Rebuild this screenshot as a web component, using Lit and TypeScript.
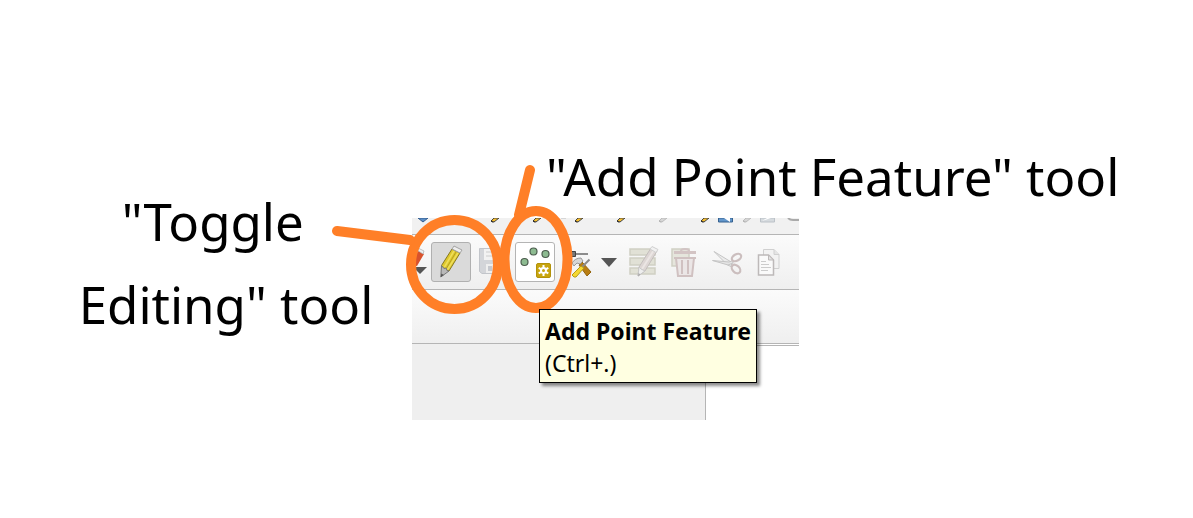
import { LitElement, html, css, svg } from "lit";
import { customElement } from "lit/decorators.js";

const pencilTip = (x: number, muted = false) => svg`
  <g opacity=${muted ? 0.3 : 1}>
    <path d="M${x + 3} 0 L${x} 3 L${x + 1} 4 L${x + 3} 4 L${x + 8} 0Z" fill=${muted ? "#999" : "#f5bd2d"} stroke="#444" stroke-width="1"/>
    <path d="M${x} 2 L${x} 4 L${x + 3} 4Z" fill="#333"/>
  </g>`;

@customElement("app-root")
export class AppRoot extends LitElement {
  static styles = css`
    :host {
      display: block;
      background: #fff;
      color: #000;
      font-family: "Noto Sans", "Open Sans", sans-serif;
    }
    .guide {
      display: grid;
      grid-template-columns: 412px minmax(387px, 1fr);
      grid-template-rows: 218px auto;
      min-height: 100vh;
    }
    .label {
      margin: 0;
      font-size: 51px;
      font-weight: 400;
      line-height: 83px;
    }
    .label-add {
      grid-column: 2;
      align-self: end;
      padding: 0 0 0 134px;
      white-space: nowrap;
    }
    .label-toggle {
      grid-column: 1;
      grid-row: 1 / 3;
      padding: 180px 0 0 40px;
      text-align: center;
      white-space: pre;
    }
    .capture {
      grid-column: 2;
      grid-row: 2;
      position: relative;
      width: 387px;
      align-self: start;
    }
    .bar {
      box-sizing: border-box;
      border-bottom: 1px solid #b5b5b5;
      background: linear-gradient(#fbfbfb, #efefef);
      overflow: hidden;
    }
    .bar-clipped {
      height: 17px;
      background: #f1f1f1;
    }
    .bar-tools {
      height: 55px;
      display: flex;
      align-items: center;
    }
    .bar-empty {
      height: 54px;
    }
    svg {
      display: block;
      flex: none;
    }
    .tool {
      flex: none;
      box-sizing: border-box;
      display: grid;
      place-items: center;
      width: 40px;
      height: 40px;
      margin: 0 1px;
      padding: 0;
      border: 1px solid transparent;
      border-radius: 3px;
      background: none;
    }
    .tool.first {
      width: 17px;
      margin: 0 1px 0 0;
      justify-content: start;
    }
    .tool.pressed {
      background: #dadada;
      border-color: #b0b0b0;
    }
    .tool.hover {
      background: #fff;
      border-color: #b4b4b4;
    }
    .tool.menu {
      width: 60px;
      margin: 0 1px 0 5px;
    }
    .workspace {
      display: flex;
      height: 76px;
    }
    .panel {
      box-sizing: border-box;
      width: 294px;
      background: #efefef;
      border-right: 1px solid #b5b5b5;
    }
    .canvas {
      flex: 1;
      margin-top: 1px;
      border-top: 1px solid #b5b5b5;
    }
    .marks {
      position: absolute;
      left: 0;
      top: 0;
      overflow: visible;
      pointer-events: none;
    }
    .tooltip {
      position: absolute;
      left: 127px;
      top: 91px;
      box-sizing: border-box;
      padding: 5px 5px 3px;
      border: 1px solid #000;
      background: #ffffe1;
      box-shadow: 3px 3px 3px rgba(0, 0, 0, 0.45);
      font-size: 23px;
      line-height: 32px;
      white-space: nowrap;
    }
    .tooltip strong {
      display: block;
      font-weight: 700;
    }
  `;

  render() {
    return html`
      <main class="guide">
        <p class="label label-add">"Add Point Feature" tool</p>
        <p class="label label-toggle">${'"Toggle  \nEditing" tool'}</p>
        <section class="capture">
          <div class="bar bar-clipped">
            <svg width="387" height="16" aria-hidden="true">
              <path d="M6 0h10l-5 4z" fill="#5b8fc8" stroke="#355d8c"/>
              ${[79, 121, 163, 205, 289].map((x) => pencilTip(x))}
              ${[247, 331].map((x) => pencilTip(x, true))}
              <path d="M306.500 0h14v4h-14z" fill="#6296cb" stroke="#35618f"/>
              <path d="M312 0h6v4z" fill="#fff"/>
              <path d="M348.500 0h14v4h-14z" fill="#d5dade" stroke="#bcc2c8"/>
              <path d="M350 3l5-3h4z" fill="#fff"/>
              <path d="M376 0q2 2 5 2h6" fill="none" stroke="#aaa" stroke-width="2"/>
              <path d="M149 0h5" stroke="#bbb"/>
            </svg>
          </div>
          <div class="bar bar-tools">
            <button class="tool first" aria-label="Current edits">
              <svg width="16" height="38" aria-hidden="true">
                <path d="M-3 22L5 8l6 3-7 12z" fill="#d8522c"/>
                <path d="M5 5l6 3-1 3-6-4z" fill="#eee" stroke="#aaa" stroke-width=".7"/>
                <path d="M0 24h14l-7 7z" fill="#555"/>
              </svg>
            </button>
            <button class="tool pressed" aria-label="Toggle Editing">
              <svg width="38" height="38" viewBox="0 0 38 38" aria-hidden="true">
                <path d="M9.500 22.500L20 6l8 4-11 18-5-1z" fill="#e0c92c" stroke="#857823"/>
                <path d="M12.500 24L22 8M15.500 26.500L26 10" stroke="#eede5c" stroke-width="1.500"/>
                <path d="M14 26L24 9" stroke="#b5a122"/>
                <path d="M20 6l2-3 8 4-2 3z" fill="#ededed" stroke="#a4a4a4"/>
                <path d="M9.500 22.500l2.500 3 2-.5 1 2.500 2 .5-8.200 6z" fill="#b9b9b9" stroke="#777"/>
                <path d="M9.300 30.500l2.500 1.500-3 2z" fill="#555"/>
              </svg>
            </button>
            <button class="tool" aria-label="Save Layer Edits">
              <svg width="38" height="38" viewBox="0 0 38 38" aria-hidden="true">
                <path d="M5.500 5.500h26v25H8l-2.500-2z" fill="#d3d5d9" stroke="#c2c5ca"/>
                <path d="M10 6h17v11H10z" fill="#f2f2f2"/><path d="M12 9h13M12 13h13" stroke="#ccc"/>
                <path d="M12 21h13v9H12z" fill="#eee"/><path d="M14 23h4v5h-4z" fill="#c5c8ce"/>
              </svg>
            </button>
            <button class="tool hover" aria-label="Add Point Feature" aria-describedby="tip">
              <svg width="38" height="38" viewBox="0 0 38 38" aria-hidden="true">
                <g fill="#8dbb91" stroke="#4c5d4e" stroke-width="1.200">
                  <circle cx="17.500" cy="8.500" r="3.500"/><circle cx="29.500" cy="11" r="3.500"/><circle cx="8.500" cy="19" r="3.500"/>
                </g>
                <rect x="20.500" y="20.500" width="14" height="14" rx="1.500" fill="#c8a50e" stroke="#b3920a"/>
                <path d="M27.500 22v11M22.700 24.800l9.600 5.500M32.300 24.800l-9.600 5.500" stroke="#fff" stroke-width="2"/>
                <circle cx="27.500" cy="27.500" r="3.400" fill="#fff"/><circle cx="27.500" cy="27.500" r="1.500" fill="#c8a50e"/>
              </svg>
            </button>
            <button class="tool menu" aria-label="Vertex Tool">
              <svg width="58" height="38" viewBox="0 0 58 38" aria-hidden="true">
                <path d="M11 11h15" stroke="#8c8c8c" stroke-width="2"/>
                <path d="M9.500 8.500h4v5h-4z" fill="#777" stroke="#444"/>
                <path d="M17 22l3-3 9 10-4 4z" fill="#b87d12" stroke="#94640c"/>
                <path d="M10 20q3-5 9-5l2 3-3 3-3-1-3 3z" fill="#d6d6d6" stroke="#999"/>
                <path d="M27.500 16.500L18 26" stroke="#8a8a8a" stroke-width="2"/>
                <path d="M10 32l9-9 3 2-8 9h-2z" fill="#f5d832" stroke="#b69a17"/>
                <path d="M39 15h16l-8 9z" fill="#555"/>
              </svg>
            </button>
            <button class="tool" aria-label="Modify Attributes" disabled>
              <svg width="38" height="38" viewBox="0 0 38 38" aria-hidden="true">
                <g fill="#e1e1d6" stroke="#d0d0c3" stroke-width="1.500">
                  <path d="M6 6h25v6H6zM6 15h25v7H6zM6 25h25v6H6z"/>
                </g>
                <path d="M15 24L27 5l6 3-12 20-7 5z" fill="#ddd6d4" stroke="#c3bebc"/>
                <path d="M18 26L30 7" stroke="#ebe6e4" stroke-width="2"/>
                <path d="M26 6l2-2.500 6 3-2 3z" fill="#f2f2f2" stroke="#d0d0d0"/>
                <path d="M15 24l2 2 4 2-7 5z" fill="#eee" stroke="#c8c8c8"/>
                <path d="M14.500 30l2 1.500-2.500 2z" fill="#aaa"/>
              </svg>
            </button>
            <button class="tool" aria-label="Delete Selected" disabled>
              <svg width="38" height="38" viewBox="0 0 38 38" aria-hidden="true">
                <path d="M6 6h17v17H6z" fill="#e5e5dc" stroke="#d0d0c3" stroke-width="1.500"/>
                <path d="M15 8q0-2 4-2t4 2" fill="none" stroke="#d2c4c4" stroke-width="2"/>
                <path d="M8 9.500h22" stroke="#d3c4c4" stroke-width="3"/>
                <path d="M10 15h18l-2 18H12z" fill="#ebe6e6" stroke="#d0c1c1" stroke-width="2"/>
                <path d="M8 15h22" stroke="#d0c1c1" stroke-width="2"/>
                <path d="M16 17v14M22 17v14" stroke="#d0c1c1" stroke-width="2"/>
              </svg>
            </button>
            <button class="tool" aria-label="Cut Features" disabled>
              <svg width="38" height="38" viewBox="0 0 38 38" aria-hidden="true">
                <path d="M6 8.500l18 11-1 4q-4-1-6-4z" fill="#ececec" stroke="#c4c4c4"/>
                <path d="M4.500 17.500L21 19l4-1.500v2.500l-5 2z" fill="#e4e4e4" stroke="#c4c4c4"/>
                <g fill="none" stroke="#cbbebe" stroke-width="2.200">
                  <ellipse cx="28.500" cy="14.500" rx="5" ry="3.200" transform="rotate(-30 28.500 14.500)"/>
                  <ellipse cx="28" cy="26" rx="5" ry="3.400" transform="rotate(45 28 26)"/>
                </g>
              </svg>
            </button>
            <button class="tool" aria-label="Copy Features" disabled>
              <svg width="38" height="38" viewBox="0 0 38 38" aria-hidden="true">
                <path d="M13.500 6.500H24l5 5v14H13.500z" fill="#f2f2f2" stroke="#d0d0d0"/>
                <path d="M24 6.500v5h5" fill="#e4e4e4" stroke="#d0d0d0"/>
                <path d="M8.500 12h10l5 5v15h-15z" fill="#fafafa" stroke="#bdb9b9" stroke-width="1.500"/>
                <path d="M18.500 12v5h5z" fill="#e2e2e2" stroke="#bdb9b9"/>
                <path d="M11 18.500h5M11 21.500h8M11 24.500h10M11 27.500h7" stroke="#ccc"/>
              </svg>
            </button>
          </div>
          <div class="bar bar-empty"></div>
          <div class="workspace"><div class="panel"></div><div class="canvas"></div></div>
          <svg class="marks" width="387" height="202" aria-hidden="true">
            <g fill="none" stroke="#ff7f27" stroke-width="10" stroke-linecap="round">
              <ellipse cx="42.500" cy="46.500" rx="43.500" ry="44.500"/>
              <ellipse cx="124" cy="41.500" rx="31.500" ry="48.500"/>
              <path d="M-75 13L-2 22M118 -48L107 -3"/>
            </g>
          </svg>
          <div class="tooltip" id="tip" role="tooltip"><strong>Add Point Feature</strong>(Ctrl+.)</div>
        </section>
      </main>
    `;
  }
}
